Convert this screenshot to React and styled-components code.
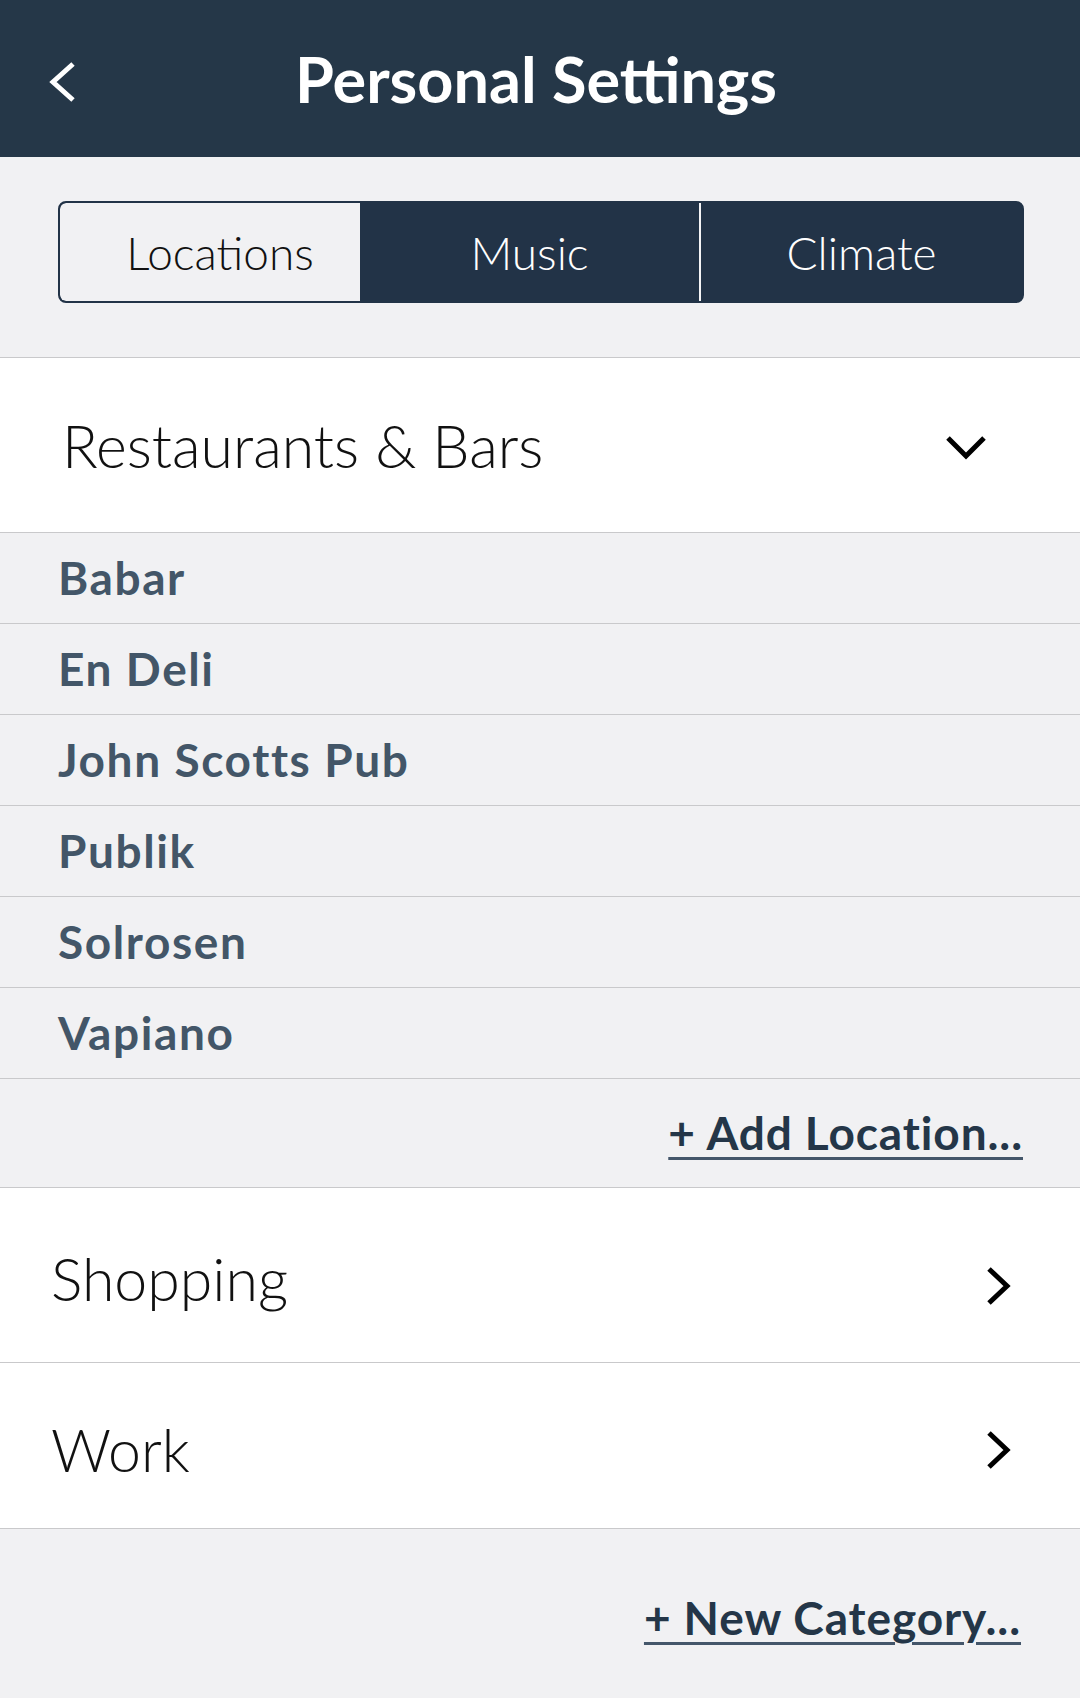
import styled, { createGlobalStyle } from "styled-components";

const GlobalStyle = createGlobalStyle`
  html, body {
    margin: 0;
    padding: 0;
    background: #f1f1f3;
  }
  body {
    font-family: "Lato", "Open Sans", sans-serif;
  }
`;

const Page = styled.div`
  width: 1080px;
  min-height: 1698px;
  background: #f1f1f3;
`;

const Header = styled.header`
  height: 157px;
  background: #253748;
  display: grid;
  grid-template-columns: 1fr auto 1fr;
  align-items: center;
`;

const BackButton = styled.div`
  padding-left: 48px;
  display: flex;
  align-items: center;
  padding-top: 6px;
`;

const Title = styled.h1`
  margin: 0;
  color: #fff;
  font-size: 63px;
  font-weight: 700;
  line-height: 1;
  padding-right: 8px;
`;

const TabsArea = styled.div`
  padding: 44px 56px 54px 58px;
  border-bottom: 1px solid #c9c9cb;
`;

const Tabs = styled.div`
  display: flex;
  height: 102px;
  box-sizing: border-box;
  border: 2px solid #223347;
  border-radius: 8px;
  background: #223347;
  overflow: hidden;
`;

const Tab = styled.div`
  width: ${(p) => p.$w}px;
  flex: none;
  display: flex;
  align-items: center;
  justify-content: center;
  font-size: 46px;
  font-weight: 300;
  color: ${(p) => (p.$active ? "#111" : "#fff")};
  background: ${(p) => (p.$active ? "#f1f1f3" : "transparent")};
  border-radius: ${(p) => (p.$active ? "6px 0 0 6px" : "0")};
  border-left: ${(p) => (p.$divider ? "2px solid #f4f4f6" : "none")};
  box-sizing: border-box;
  padding-left: ${(p) => p.$shift || 0}px;
`;

const CategoryRow = styled.div`
  height: ${(p) => p.$h}px;
  background: #fff;
  border-bottom: 1px solid #c9c9cb;
  display: flex;
  align-items: center;
  justify-content: space-between;
  padding-left: ${(p) => p.$pl}px;
  padding-right: ${(p) => p.$pr}px;
  font-size: 59px;
  font-weight: 300;
  color: #111;
`;

const CategoryName = styled.span`
  line-height: 1;
  padding-top: ${(p) => p.$dy || 0}px;
`;

const ChevronSlot = styled.span`
  display: flex;
  padding-top: ${(p) => p.$dy || 0}px;
`;

const LocationRow = styled.div`
  height: 90px;
  border-bottom: 1px solid #c9c9cb;
  display: flex;
  align-items: center;
  padding-left: 58px;
  font-size: 46px;
  font-weight: 700;
  letter-spacing: 1.6px;
  color: #435668;
  line-height: 1;
`;

const LinkRow = styled.div`
  height: ${(p) => p.$h}px;
  display: flex;
  align-items: ${(p) => (p.$bottom ? "flex-start" : "center")};
  justify-content: flex-end;
  padding-right: ${(p) => p.$pr}px;
  padding-top: ${(p) => p.$pt || 0}px;
  box-sizing: border-box;
  border-bottom: ${(p) => (p.$line ? "1px solid #c9c9cb" : "none")};
`;

const AddLink = styled.a`
  font-size: 46px;
  font-weight: 700;
  letter-spacing: 0.9px;
  color: #243648;
  line-height: 1;
  text-decoration: underline;
  text-decoration-color: #44566a;
  text-decoration-thickness: 3px;
  text-underline-offset: 7px;
  cursor: pointer;
`;

const Chevron = ({ dir }) => {
  if (dir === "left") {
    return (
      <svg width="30" height="44" viewBox="0 0 30 44">
        <polyline points="25,4 5,22 25,40" fill="none" stroke="#fff" strokeWidth="5" />
      </svg>
    );
  }
  if (dir === "down") {
    return (
      <svg width="44" height="30" viewBox="0 0 44 30">
        <polyline points="4,5 22,23 40,5" fill="none" stroke="#000" strokeWidth="5" />
      </svg>
    );
  }
  return (
    <svg width="30" height="44" viewBox="0 0 30 44">
      <polyline points="5,4 23,21 5,38" fill="none" stroke="#000" strokeWidth="5" />
    </svg>
  );
};

const locations = ["Babar", "En Deli", "John Scotts Pub", "Publik", "Solrosen", "Vapiano"];

export default function App() {
  return (
    <Page>
      <GlobalStyle />
      <Header>
        <BackButton>
          <Chevron dir="left" />
        </BackButton>
        <Title>Personal Settings</Title>
        <div />
      </Header>

      <TabsArea>
        <Tabs>
          <Tab $active $w={300} $shift={20}>
            Locations
          </Tab>
          <Tab $w={339}>Music</Tab>
          <Tab $w={323} $divider>
            Climate
          </Tab>
        </Tabs>
      </TabsArea>

      <CategoryRow $h={174} $pl={62} $pr={92}>
        <CategoryName>Restaurants &amp; Bars</CategoryName>
        <ChevronSlot $dy={6}>
          <Chevron dir="down" />
        </ChevronSlot>
      </CategoryRow>

      {locations.map((name) => (
        <LocationRow key={name}>{name}</LocationRow>
      ))}

      <LinkRow $h={109} $pr={57} $line>
        <AddLink>+ Add Location...</AddLink>
      </LinkRow>

      <CategoryRow $h={174} $pl={51} $pr={66}>
        <CategoryName $dy={6}>Shopping</CategoryName>
        <ChevronSlot $dy={24}>
          <Chevron dir="right" />
        </ChevronSlot>
      </CategoryRow>

      <CategoryRow $h={165} $pl={51} $pr={66}>
        <CategoryName $dy={8}>Work</CategoryName>
        <ChevronSlot $dy={10}>
          <Chevron dir="right" />
        </ChevronSlot>
      </CategoryRow>

      <LinkRow $h={168} $pr={59} $pt={66} $bottom>
        <AddLink>+ New Category...</AddLink>
      </LinkRow>
    </Page>
  );
}
